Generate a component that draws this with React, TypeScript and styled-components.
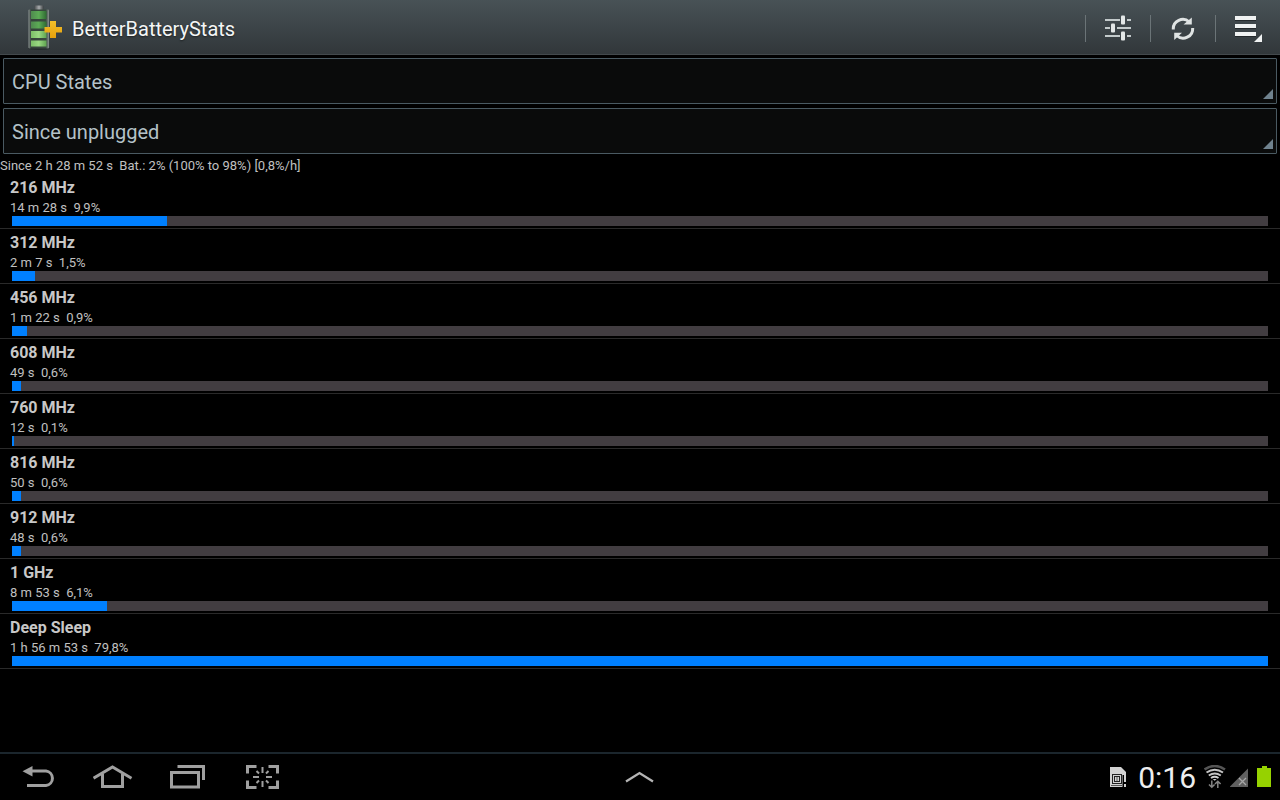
import React, { useState } from "react";
import styled, { createGlobalStyle } from "styled-components";

const GlobalStyle = createGlobalStyle`
  * { box-sizing: border-box; }
  body {
    margin: 0;
    background: #000;
    color: #c0c0c0;
    font-family: Roboto, "Liberation Sans", sans-serif;
  }
`;

const Screen = styled.div`
  display: flex;
  flex-direction: column;
  min-height: 100vh;
`;

const ActionBar = styled.header`
  display: flex;
  align-items: stretch;
  height: 55px;
  background: linear-gradient(#485256, #31373a);
  border-bottom: 1px solid #43494c;
`;

const Brand = styled.div`
  display: flex;
  flex: 1;
  align-items: center;
  gap: 8px;
  padding-left: 26px;
`;

const Title = styled.h1`
  margin: 0;
  padding-top: 4px;
  color: #f4f6f6;
  font-size: 20px;
  font-weight: 400;
  line-height: 24px;
  text-shadow: 0 1px 2px rgba(0, 0, 0, 0.5);
`;

const Actions = styled.div`
  display: flex;
  align-items: center;
  padding-top: 3px;
`;

const ActionButton = styled.button`
  display: flex;
  align-items: center;
  justify-content: center;
  width: 65px;
  height: 27px;
  padding: 0;
  border: 0;
  border-left: 1px solid #6b7477;
  background: none;
  cursor: pointer;
`;

const Filters = styled.div`
  display: flex;
  flex-direction: column;
  gap: 4px;
  padding: 3px 3px 4px;
`;

const Field = styled.div`
  position: relative;
`;

const Select = styled.select`
  display: block;
  width: 100%;
  height: 46px;
  padding: 2px 8px 0;
  border: 1px solid #4a5a62;
  border-radius: 1px;
  background: #0a0b0b;
  color: #b4c2c8;
  font: 400 20px/24px Roboto, "Liberation Sans", sans-serif;
  appearance: none;
`;

const Corner = styled.svg`
  position: absolute;
  right: 4px;
  bottom: 5px;
  pointer-events: none;
`;

const Main = styled.main`
  flex: 1;
`;

const Summary = styled.p`
  margin: 0;
  font-size: 13px;
  line-height: 16px;
  white-space: pre;
`;

const StateList = styled.ul`
  margin: 0;
  padding: 0;
  list-style: none;
`;

const StateRow = styled.li`
  height: 55px;
  padding: 4px 12px 0 10px;
  border-bottom: 1px solid #2a2a2a;
`;

const StateName = styled.h2`
  margin: 0 0 2px;
  color: #c8c8c8;
  font-size: 16px;
  font-weight: 700;
  line-height: 20px;
`;

const StateTime = styled.p`
  margin: 0;
  font-size: 13px;
  line-height: 16px;
  white-space: pre;
`;

const Track = styled.div`
  height: 10px;
  margin-left: 2px;
  background: #423d41;
`;

const Fill = styled.div`
  height: 100%;
  background: #0080ff;
`;

const SystemBar = styled.footer`
  display: grid;
  grid-template-columns: 1fr auto 1fr;
  align-items: center;
  height: 48px;
  border-top: 2px solid #1b262d;
`;

const NavKeys = styled.nav`
  display: flex;
`;

const NavButton = styled.button`
  display: flex;
  align-items: center;
  justify-content: center;
  width: 75px;
  height: 46px;
  padding: 0;
  border: 0;
  background: none;
  cursor: pointer;
`;

const Status = styled.div`
  display: flex;
  align-items: center;
  justify-content: flex-end;
  gap: 8px;
  padding-right: 8px;
`;

const Signals = styled.div`
  display: flex;
  align-items: center;
  gap: 4px;
`;

const Clock = styled.time`
  padding: 2px 0 0 3px;
  color: #eeeeee;
  font-size: 30px;
  line-height: 36px;
`;

const Logo = () => (
  <svg width="38" height="46" viewBox="26 4 38 46" aria-hidden="true">
    <defs>
      <linearGradient id="glass">
        <stop offset="0" stopColor="#8c9492" />
        <stop offset=".12" stopColor="#34423a" />
        <stop offset=".85" stopColor="#3a4a40" />
        <stop offset="1" stopColor="#8c9492" />
      </linearGradient>
      <linearGradient id="cap">
        <stop offset="0" stopColor="#4a4e50" />
        <stop offset=".5" stopColor="#a9acae" />
        <stop offset="1" stopColor="#3f4345" />
      </linearGradient>
      <linearGradient id="cellA">
        <stop offset="0" stopColor="#4f8a4f" />
        <stop offset=".5" stopColor="#5cab55" />
        <stop offset="1" stopColor="#2f6b33" />
      </linearGradient>
      <linearGradient id="cellB">
        <stop offset="0" stopColor="#7cc068" />
        <stop offset=".5" stopColor="#9ad982" />
        <stop offset="1" stopColor="#5fa450" />
      </linearGradient>
      <linearGradient id="gold" x2="0" y2="1">
        <stop offset="0" stopColor="#f4c02a" />
        <stop offset="1" stopColor="#e5a00d" />
      </linearGradient>
    </defs>
    <ellipse cx="39" cy="48.5" rx="11" ry="1.5" fill="#1e2325" opacity=".7" />
    <rect x="34.500" y="5.500" width="9" height="4.500" rx="1" fill="url(#cap)" />
    <rect x="28.500" y="9.500" width="20.500" height="39" rx="1" fill="url(#glass)" />
    <rect x="31" y="11" width="15.500" height="8" fill="url(#cellA)" />
    <rect x="31" y="21.500" width="15.500" height="7" fill="url(#cellA)" />
    <rect x="31" y="31" width="15.500" height="7" fill="url(#cellB)" />
    <rect x="31" y="40.500" width="15.500" height="6" fill="url(#cellB)" />
    <path d="M50 21h6v6h6v5.500h-6v5.500h-6v-5.500h-5.500v-5.500h5.500z" fill="url(#gold)" />
  </svg>
);

const SlidersIcon = () => (
  <svg width="28" height="27" viewBox="1104 15 28 27" aria-hidden="true">
    <path d="M1105 20h15M1127 20h4M1105 28h5M1117 28h14M1105 36h15M1127 36h4" stroke="#c3cacb" strokeWidth="2" />
    <g fill="#e3e7e7">
      <rect x="1121" y="15.500" width="4" height="9" rx="1" />
      <rect x="1111" y="23.500" width="4" height="9" rx="1" />
      <rect x="1121" y="31.500" width="4" height="9" rx="1" />
    </g>
  </svg>
);

const RefreshIcon = () => (
  <svg width="26" height="26" viewBox="1170 15 26 26" aria-hidden="true">
    <g fill="none" stroke="#dfe3e3" strokeWidth="3">
      <path d="M1173.300 28.500a9.500 9.500 0 0 1 16-7.500" />
      <path d="M1192.700 27a9.500 9.500 0 0 1-16 7.500" />
    </g>
    <path d="M1191.800 16.500v7h-8.300z M1174.200 39v-7.300h7.800z" fill="#dfe3e3" />
  </svg>
);

const MenuIcon = () => (
  <svg width="28" height="27" viewBox="1234 15 28 27" aria-hidden="true">
    <path d="M1235 17h21v4h-21zM1235 25h21v4h-21zM1235 33h21v4h-21z" fill="#15191a" opacity=".6" />
    <path d="M1235 16h21v4h-21zM1235 24h21v4h-21zM1235 32h21v4h-21zM1262 34v8h-8z" fill="#f0f2f2" />
  </svg>
);

const BackIcon = () => (
  <svg width="34" height="24" viewBox="21 765 34 24" aria-hidden="true">
    <path d="M31 771h15a7.300 7.300 0 0 1 0 14.500H27" fill="none" stroke="#a0a0a0" strokeWidth="3" />
    <path d="M22.500 771.300L32.500 766v10.600z" fill="#a0a0a0" />
  </svg>
);

const HomeIcon = () => (
  <svg width="40" height="24" viewBox="93 765 40 24" aria-hidden="true">
    <g fill="none" stroke="#a0a0a0" strokeWidth="3">
      <path d="M93.500 778.200L112.500 767l19 11.200" />
      <path d="M102.500 774v12.500h20V774" />
    </g>
  </svg>
);

const RecentsIcon = () => (
  <svg width="36" height="24" viewBox="170 765 36 24" aria-hidden="true">
    <g fill="none" stroke="#a0a0a0" strokeWidth="3">
      <rect x="171.500" y="772.500" width="27" height="14.500" />
      <path d="M177.500 766.500h26v13.500" />
    </g>
  </svg>
);

const CaptureIcon = () => (
  <svg width="34" height="26" viewBox="246 764 34 26" aria-hidden="true">
    <g fill="none" stroke="#a0a0a0">
      <path d="M247.500 773.500v-7h9M268.500 766.500h9v7M277.500 780.500v7h-9M256.500 787.500h-9v-7" strokeWidth="3" />
      <path
        d="M262.500 767v6M262.500 781v6M253 777h6M266 777h6M256.500 771l2.500 2.500M268.500 771l-2.500 2.500M256.500 783l2.500-2.500M268.500 783l-2.500-2.500"
        strokeWidth="2"
      />
    </g>
  </svg>
);

const UpIcon = () => (
  <svg width="32" height="14" viewBox="0 0 32 14" aria-hidden="true">
    <path d="M2 11.500L15.500 3L29 11.500" fill="none" stroke="#b4b4b4" strokeWidth="2.300" />
  </svg>
);

const SimIcon = () => (
  <svg width="17" height="22" viewBox="1109 765 17 22" aria-hidden="true">
    <path d="M1109 766h11l5 5v15h-16z" fill="#d2d2d2" />
    <g fill="none" stroke="#222">
      <rect x="1111.500" y="773.500" width="9" height="9" />
      <rect x="1113.500" y="775.500" width="5" height="5" />
      <path d="M1116 776v5M1110 784.500h11" strokeWidth=".7" />
    </g>
    <path d="M1121.500 774h3.500v12h-3.500z" fill="#000" />
    <path d="M1123 774h2v7h-2zM1123 783h2v3h-2z" fill="#d2d2d2" />
  </svg>
);

const WifiIcon = () => (
  <svg width="22" height="24" viewBox="1204 764 22 24" aria-hidden="true">
    <g fill="none" strokeWidth="2">
      <path d="M1204.500 768.500q10.200-7 20.500 0" stroke="#555" strokeWidth="2.500" />
      <path d="M1206.500 771.500q8.200-5.500 16.500 0M1208.800 774.500q6-4 12 0" stroke="#c4c4c4" />
      <path d="M1211 777q3.700-2.300 7.500 0" stroke="#d0d0d0" />
    </g>
    <path d="M1212.700 778h4l-2 1.800z" fill="#d0d0d0" />
    <g fill="none" stroke="#858585" strokeWidth="1.500">
      <path d="M1211.800 779.500v6.500M1209 783.500l2.800 2.800 2.800-2.800" />
      <path d="M1217.800 787v-6.500M1215 783l2.800-2.800 2.800 2.800" />
    </g>
  </svg>
);

const SignalIcon = () => (
  <svg width="19" height="22" viewBox="1230 765 19 22" aria-hidden="true">
    <path d="M1248 767.500V786h-18.500z" fill="#606060" />
    <path d="M1239 777l7 7M1246 777l-7 7" stroke="#a8a8a8" strokeWidth="1.300" />
  </svg>
);

const BatteryIcon = () => (
  <svg width="15" height="22" viewBox="1257 765 15 22" aria-hidden="true">
    <path d="M1262 765h5v2h4v19h-14v-19h5z" fill="#96d200" />
  </svg>
);

type CpuState = { name: string; time: string; share: string; seconds: number };

const states: CpuState[] = [
  { name: "216 MHz", time: "14 m 28 s", share: "9,9%", seconds: 868 },
  { name: "312 MHz", time: "2 m 7 s", share: "1,5%", seconds: 127 },
  { name: "456 MHz", time: "1 m 22 s", share: "0,9%", seconds: 82 },
  { name: "608 MHz", time: "49 s", share: "0,6%", seconds: 49 },
  { name: "760 MHz", time: "12 s", share: "0,1%", seconds: 12 },
  { name: "816 MHz", time: "50 s", share: "0,6%", seconds: 50 },
  { name: "912 MHz", time: "48 s", share: "0,6%", seconds: 48 },
  { name: "1 GHz", time: "8 m 53 s", share: "6,1%", seconds: 533 },
  { name: "Deep Sleep", time: "1 h 56 m 53 s", share: "79,8%", seconds: 7013 },
];

const longest = Math.max(...states.map((s) => s.seconds));

function Dropdown({ label, options }: { label: string; options: string[] }) {
  const [value, setValue] = useState(options[0]);
  return (
    <Field>
      <Select aria-label={label} value={value} onChange={(e) => setValue(e.target.value)}>
        {options.map((o) => (
          <option key={o}>{o}</option>
        ))}
      </Select>
      <Corner width="10" height="10" viewBox="0 0 10 10" aria-hidden="true">
        <path d="M10 0v10H0z" fill="#6f828e" />
      </Corner>
    </Field>
  );
}

export default function App() {
  return (
    <Screen>
      <GlobalStyle />
      <ActionBar>
        <Brand>
          <Logo />
          <Title>BetterBatteryStats</Title>
        </Brand>
        <Actions>
          <ActionButton aria-label="Preferences"><SlidersIcon /></ActionButton>
          <ActionButton aria-label="Refresh"><RefreshIcon /></ActionButton>
          <ActionButton aria-label="Menu"><MenuIcon /></ActionButton>
        </Actions>
      </ActionBar>
      <Main>
        <Filters>
          <Dropdown label="Statistic" options={["CPU States"]} />
          <Dropdown label="Period" options={["Since unplugged"]} />
        </Filters>
        <Summary>{"Since 2 h 28 m 52 s  Bat.: 2% (100% to 98%) [0,8%/h]"}</Summary>
        <StateList>
          {states.map((s) => (
            <StateRow key={s.name}>
              <StateName>{s.name}</StateName>
              <StateTime>{`${s.time}  ${s.share}`}</StateTime>
              <Track>
                <Fill style={{ width: `${(s.seconds / longest) * 100}%` }} />
              </Track>
            </StateRow>
          ))}
        </StateList>
      </Main>
      <SystemBar>
        <NavKeys aria-label="System">
          <NavButton aria-label="Back"><BackIcon /></NavButton>
          <NavButton aria-label="Home"><HomeIcon /></NavButton>
          <NavButton aria-label="Recent apps"><RecentsIcon /></NavButton>
          <NavButton aria-label="Screenshot"><CaptureIcon /></NavButton>
        </NavKeys>
        <NavButton aria-label="Show tray"><UpIcon /></NavButton>
        <Status>
          <SimIcon />
          <Clock>0:16</Clock>
          <Signals>
            <WifiIcon />
            <SignalIcon />
          </Signals>
          <BatteryIcon />
        </Status>
      </SystemBar>
    </Screen>
  );
}
